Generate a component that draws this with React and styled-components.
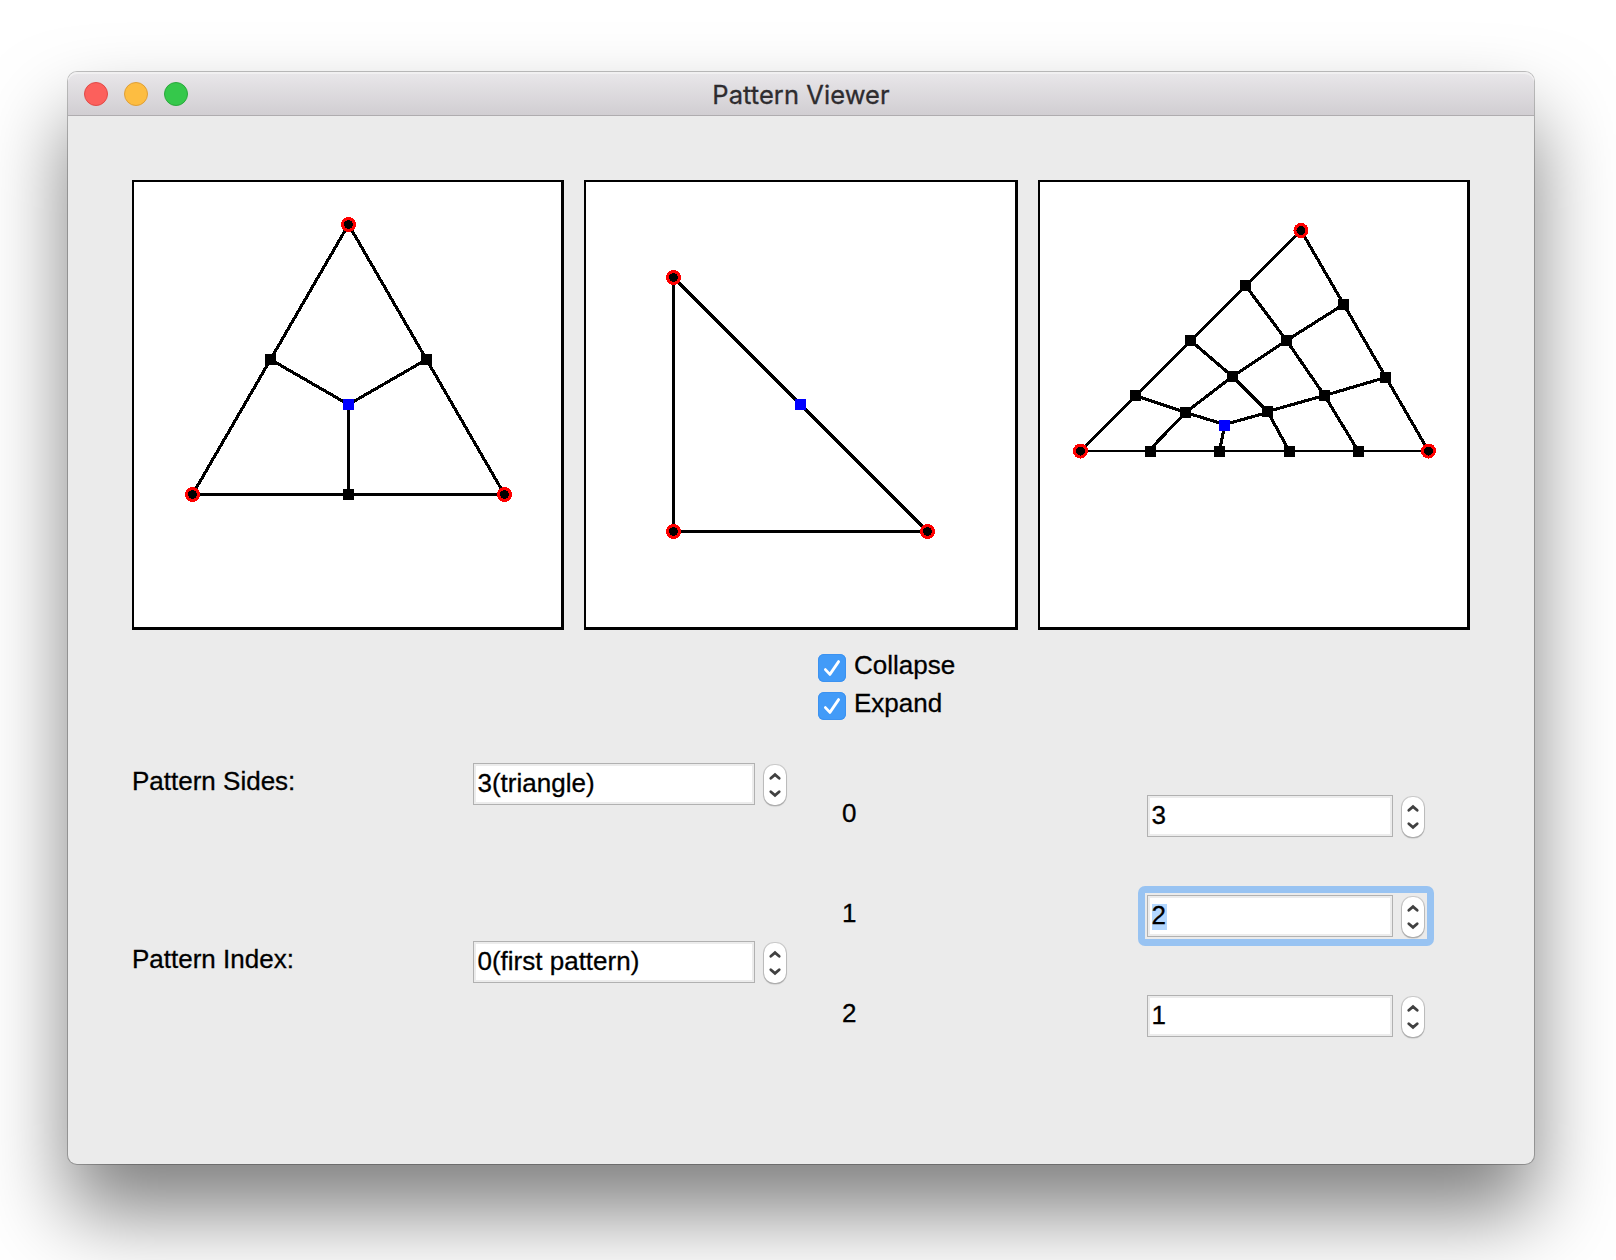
import React from "react";
import styled, { createGlobalStyle, css } from "styled-components";

const GlobalStyle = createGlobalStyle`
  html, body { margin: 0; background: #fff; overflow: hidden; }
  * { box-sizing: border-box; }
`;

const Desktop = styled.div`
  width: 1616px;
  height: 1260px;
  padding: 72px 82px 96px 68px;
  overflow: hidden;
  background: #fff;
`;

const Window = styled.main`
  display: flex;
  flex-direction: column;
  height: 1092px;
  border-radius: 9px;
  background: #ebebeb;
  box-shadow: 0 0 0 1px rgba(0, 0, 0, 0.24), 0 48px 82px rgba(0, 0, 0, 0.5);
  font-family: "Liberation Sans", Arial, sans-serif;
  font-size: 26px;
  color: #000;
  -webkit-text-stroke: 0.3px currentColor;
`;

const TitleBar = styled.header`
  display: grid;
  grid-template-columns: 1fr auto 1fr;
  align-items: center;
  height: 44px;
  padding: 0 16px;
  border-bottom: 1px solid #afacaf;
  border-radius: 9px 9px 0 0;
  background: linear-gradient(#e9e7ea, #d1ced2);
  box-shadow: inset 0 2px 0 #f1f0f1;
`;

const TrafficLights = styled.div`
  display: flex;
  gap: 16px;
`;

const Light = styled.span`
  width: 24px;
  height: 24px;
  border-radius: 50%;
  border: 1px solid ${(p) => p.$edge};
  background: ${(p) => p.$fill};
`;

const Title = styled.h1`
  margin: 0;
  padding-top: 2px;
  font: 400 25.5px/32px Inter, sans-serif;
  letter-spacing: 0.06px;
  color: #2e2c2f;
`;

const Content = styled.div`
  padding: 64px 64px 0;
`;

const Panels = styled.section`
  display: grid;
  grid-template-columns: 432px 434px 432px;
  gap: 20px;
`;

const Panel = styled.div`
  height: 450px;
  border: solid #000;
  border-width: 2px 3px 3px 2px;
  background: #fff;
`;

const Drawing = styled.svg`
  display: block;
  width: 100%;
  height: 100%;
  shape-rendering: crispEdges;
`;

const Options = styled.div`
  display: flex;
  flex-direction: column;
  gap: 10px;
  margin: 24px 0 0 686px;
`;

const Option = styled.label`
  display: flex;
  align-items: flex-start;
  gap: 8px;
  height: 28px;
  line-height: 22px;
`;

const CheckBox = styled.span`
  display: block;
  width: 28px;
  height: 28px;
  border-radius: 6px;
  background: #429bf8;
  box-shadow: inset 0 0 0 1px #3c92f0;
`;

const Forms = styled.section`
  display: flex;
  align-items: flex-start;
  gap: 56px;
  margin-top: 43px;
`;

const FormColumn = styled.div`
  display: flex;
  flex-direction: column;
  gap: ${(p) => p.$gap}px;
  padding-top: ${(p) => p.$top || 0}px;
`;

const Row = styled.div`
  display: flex;
  height: 42px;
`;

const Label = styled.label`
  width: ${(p) => p.$width}px;
  padding-top: 7px;
  line-height: 22px;
`;

const SpinBox = styled.div`
  display: flex;
  gap: 9px;
  ${(p) =>
    p.$focused &&
    css`
      margin: -9px;
      padding: 2px;
      height: 60px;
      width: 296px;
      border: 7px solid #98c3f2;
      border-radius: 7px;
    `}
`;

const Field = styled.div`
  width: ${(p) => p.$width}px;
  height: 42px;
  padding: 6px 2px 0;
  border: 1px solid #b1b1b1;
  background: #fff;
  box-shadow: inset 0 0 0 2px #ececec;
`;

const Value = styled.span`
  display: inline-block;
  vertical-align: top;
  min-width: 15px;
  height: 26px;
  margin: 2px 0 0 2px;
  line-height: 22px;
  text-indent: -0.5px;
  white-space: nowrap;
  background: ${(p) => (p.$selected ? "#b3d7ff" : "transparent")};
`;

const Stepper = styled.div`
  width: 22px;
  height: 40px;
  margin-top: 2px;
  border-radius: 10px;
  background: #fff;
  box-shadow: 0 0 0 1px rgba(0, 0, 0, 0.13), 0 1px 1px 0.5px rgba(0, 0, 0, 0.17);
`;

const Glyph = styled.svg`
  display: block;
  fill: none;
  stroke: ${(p) => p.$color};
  stroke-width: 2.8;
`;

const LIGHTS = [
  ["#fc605c", "#e14a47"],
  ["#fdbd41", "#df9f37"],
  ["#35c84b", "#2aa83c"],
];

const DRAWINGS = [
  {
    origin: [134, 182],
    size: [427, 445],
    lines: [
      [348.5, 224.5, 192.5, 494.5],
      [348.5, 224.5, 504.5, 494.5],
      [192.5, 494.5, 504.5, 494.5],
      [270.5, 359.5, 348.5, 404.5],
      [426.5, 359.5, 348.5, 404.5],
      [348.5, 404.5, 348.5, 494.5],
    ],
    corners: [[348.5, 224.5], [192.5, 494.5], [504.5, 494.5]],
    vertices: [[270.5, 359.5], [426.5, 359.5], [348.5, 494.5]],
    center: [348.5, 404.5],
  },
  {
    origin: [586, 182],
    size: [429, 445],
    lines: [
      [673.5, 277.5, 673.5, 531.5],
      [673.5, 531.5, 927.5, 531.5],
      [673.5, 277.5, 927.5, 531.5, 3.6],
    ],
    corners: [[673.5, 277.5], [673.5, 531.5], [927.5, 531.5]],
    vertices: [],
    center: [800.5, 404.5],
  },
  {
    origin: [1040, 182],
    size: [427, 445],
    lines: [
      [1080.5, 451, 1301, 230.5, 2.6],
      [1080.5, 451, 1428.5, 451, 2],
      [1301, 230.5, 1428.5, 451],
      [1245.5, 285.5, 1286.5, 340.5],
      [1286.5, 340.5, 1324.5, 395.5],
      [1324.5, 395.5, 1358.5, 451.5],
      [1190.5, 340.5, 1232.5, 376.5],
      [1232.5, 376.5, 1267.5, 411.5],
      [1267.5, 411.5, 1289.5, 451.5],
      [1135.5, 395.5, 1185.5, 412.5],
      [1185.5, 412.5, 1224.5, 424.5],
      [1224.5, 424.5, 1267.5, 412.5],
      [1267.5, 411.5, 1324.5, 395.5],
      [1324.5, 395.5, 1385.5, 377.5],
      [1343.5, 304.5, 1286.5, 340.5],
      [1286.5, 340.5, 1232.5, 376.5],
      [1232.5, 376.5, 1185.5, 412.5],
      [1185.5, 412.5, 1150.5, 449],
      [1224.5, 425.5, 1219.5, 451.5],
    ],
    corners: [[1301, 230.5], [1080.5, 451], [1428.5, 451]],
    vertices: [
      [1245.5, 285.5], [1343.5, 304.5], [1190.5, 340.5], [1286.5, 340.5],
      [1232.5, 376.5], [1385.5, 377.5], [1135.5, 395.5], [1324.5, 395.5],
      [1185.5, 412.5], [1267.5, 411.5], [1150.5, 451.5], [1219.5, 451.5],
      [1289.5, 451.5], [1358.5, 451.5],
    ],
    center: [1224.5, 425.5],
  },
];

function Vertex({ at, fill = "#000" }) {
  return <rect x={at[0] - 5.5} y={at[1] - 5.5} width="11" height="11" fill={fill} />;
}

function PatternPanel({ drawing }) {
  const { origin, size, lines, corners, vertices, center } = drawing;
  return (
    <Panel>
      <Drawing viewBox={[...origin, ...size].join(" ")}>
        {lines.map(([x1, y1, x2, y2, w = 3.1], i) => (
          <line key={i} x1={x1} y1={y1} x2={x2} y2={y2} stroke="#000" strokeWidth={w} />
        ))}
        {vertices.map((v, i) => (
          <Vertex key={i} at={v} />
        ))}
        {corners.map(([cx, cy], i) => (
          <circle key={i} cx={cx} cy={cy} r="6" fill="#000" stroke="#f00" strokeWidth="3" />
        ))}
        <Vertex at={center} fill="#00f" />
      </Drawing>
    </Panel>
  );
}

function CheckOption({ children }) {
  return (
    <Option>
      <CheckBox>
        <Glyph width="28" height="28" $color="#fff" strokeLinecap="round" strokeLinejoin="round">
          <path d="M7.4 15.6 L11.9 20.4 L20.6 7.6" />
        </Glyph>
      </CheckBox>
      {children}
    </Option>
  );
}

function Spin({ value, width, focused }) {
  return (
    <SpinBox $focused={focused}>
      <Field $width={width}>
        <Value $selected={focused}>{value}</Value>
      </Field>
      <Stepper>
        <Glyph width="22" height="40" $color="#414141" strokeLinecap="round">
          <path d="M6.8 13.3 L11 9.6 L15.2 13.3 M6.8 26.7 L11 30.4 L15.2 26.7" />
        </Glyph>
      </Stepper>
    </SpinBox>
  );
}

export default function App() {
  return (
    <Desktop>
      <GlobalStyle />
      <Window>
        <TitleBar>
          <TrafficLights>
            {LIGHTS.map(([fill, edge]) => (
              <Light key={fill} $fill={fill} $edge={edge} />
            ))}
          </TrafficLights>
          <Title>Pattern Viewer</Title>
        </TitleBar>
        <Content>
          <Panels>
            {DRAWINGS.map((d, i) => (
              <PatternPanel key={i} drawing={d} />
            ))}
          </Panels>
          <Options>
            <CheckOption>Collapse</CheckOption>
            <CheckOption>Expand</CheckOption>
          </Options>
          <Forms>
            <FormColumn $gap={136}>
              <Row>
                <Label $width={341}>Pattern Sides:</Label>
                <Spin value="3(triangle)" width={282} />
              </Row>
              <Row>
                <Label $width={341}>Pattern Index:</Label>
                <Spin value="0(first pattern)" width={282} />
              </Row>
            </FormColumn>
            <FormColumn $gap={58} $top={32}>
              {["3", "2", "1"].map((v, i) => (
                <Row key={v}>
                  <Label $width={305}>{i}</Label>
                  <Spin value={v} width={246} focused={i === 1} />
                </Row>
              ))}
            </FormColumn>
          </Forms>
        </Content>
      </Window>
    </Desktop>
  );
}
